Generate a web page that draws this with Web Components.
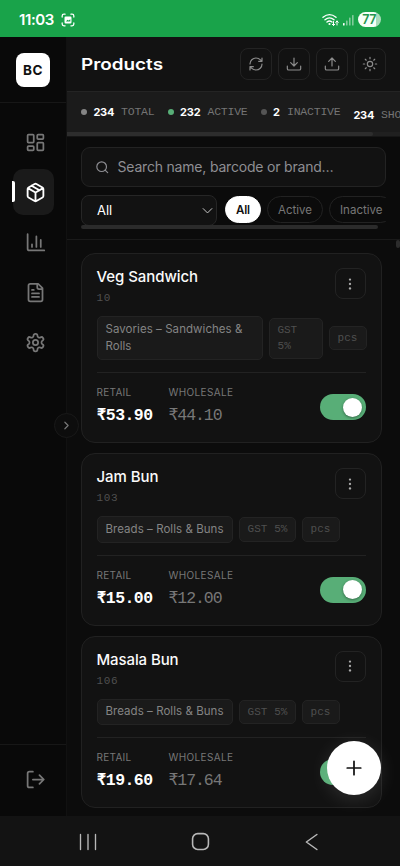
<!DOCTYPE html>
<html lang="en">
<head>
<meta charset="utf-8">
<title>Products</title>
<style>
html,body{margin:0;height:100%;background:#0a0a0a}
body{font-family:Inter,"Noto Sans",sans-serif;color:#fff;overflow:hidden}
</style>
</head>
<body>
<products-app></products-app>
<script>
const ICONS = {
  grid: '<rect x="3" y="3" width="7" height="9" rx="1"/><rect x="14" y="3" width="7" height="5" rx="1"/><rect x="14" y="12" width="7" height="9" rx="1"/><rect x="3" y="16" width="7" height="5" rx="1"/>',
  box: '<path d="m7.5 4.27 9 5.15M21 8a2 2 0 0 0-1-1.73l-7-4a2 2 0 0 0-2 0l-7 4A2 2 0 0 0 3 8v8a2 2 0 0 0 1 1.73l7 4a2 2 0 0 0 2 0l7-4A2 2 0 0 0 21 16ZM3.3 7l8.7 5 8.7-5M12 22V12"/>',
  chart: '<path d="M3 2.5V19a2 2 0 0 0 2 2h17M18 17V9M13 17V5M8 17v-3"/>',
  file: '<path d="M15 2H6a2 2 0 0 0-2 2v16a2 2 0 0 0 2 2h12a2 2 0 0 0 2-2V7ZM14 2v4a2 2 0 0 0 2 2h4M10 9H8M16 13H8M16 17H8"/>',
  gear: '<path d="M12.22 2h-.44a2 2 0 0 0-2 2v.18a2 2 0 0 1-1 1.73l-.43.25a2 2 0 0 1-2 0l-.15-.08a2 2 0 0 0-2.73.73l-.22.38a2 2 0 0 0 .73 2.73l.15.1a2 2 0 0 1 1 1.72v.51a2 2 0 0 1-1 1.74l-.15.09a2 2 0 0 0-.73 2.73l.22.38a2 2 0 0 0 2.73.73l.15-.08a2 2 0 0 1 2 0l.43.25a2 2 0 0 1 1 1.73V20a2 2 0 0 0 2 2h.44a2 2 0 0 0 2-2v-.18a2 2 0 0 1 1-1.73l.43-.25a2 2 0 0 1 2 0l.15.08a2 2 0 0 0 2.73-.73l.22-.39a2 2 0 0 0-.73-2.73l-.15-.08a2 2 0 0 1-1-1.74v-.5a2 2 0 0 1 1-1.74l.15-.09a2 2 0 0 0 .73-2.73l-.22-.38a2 2 0 0 0-2.73-.73l-.15.08a2 2 0 0 1-2 0l-.43-.25a2 2 0 0 1-1-1.73V4a2 2 0 0 0-2-2z"/><circle cx="12" cy="12" r="3"/>',
  logout: '<path d="M9 21H5a2 2 0 0 1-2-2V5a2 2 0 0 1 2-2h4M16.5 17l5-5-5-5M21 12H9"/>',
  refresh: '<path d="M3 12a9 9 0 0 1 9-9 9.75 9.75 0 0 1 6.74 2.74L21 8M21 3v5h-5M21 12a9 9 0 0 1-9 9 9.75 9.75 0 0 1-6.74-2.74L3 16M8 16H3v5"/>',
  download: '<path d="M2 15v4a2 2 0 0 0 2 2h16a2 2 0 0 0 2-2v-4M7 10l5 5 5-5M12 15V3"/>',
  upload: '<path d="M2 15v4a2 2 0 0 0 2 2h16a2 2 0 0 0 2-2v-4M17 8l-5-5-5 5M12 3v12"/>',
  sun: '<circle cx="12" cy="12" r="4"/><path d="M12 2v2M12 20v2M4.93 4.93l1.41 1.41M17.66 17.66l1.41 1.41M2 12h2M20 12h2M6.34 17.66l-1.41 1.41M19.07 4.93l-1.41 1.41"/>',
  search: '<circle cx="11" cy="11" r="8"/><path d="m21 21-4.3-4.3"/>',
  down: '<path d="m4 8.5 8 8 8-8"/>',
  right: '<path d="m9 18 6-6-6-6"/>',
  dots: '<g fill="currentColor" stroke="none"><circle cx="12" cy="4.4" r="2"/><circle cx="12" cy="12" r="2"/><circle cx="12" cy="19.6" r="2"/></g>',
  plus: '<path d="M3 12h18M12 3v18"/>',
  capture: '<path d="M2 7V5a3 3 0 0 1 3-3h2M17 2h2a3 3 0 0 1 3 3v2M22 17v2a3 3 0 0 1-3 3h-2M7 22H5a3 3 0 0 1-3-3v-2"/><path d="M8 6.2h8a2 2 0 0 1 2 2v7.6a2 2 0 0 1-2 2H8a2 2 0 0 1-2-2V8.200a2 2 0 0 1 2-2zm.5 8.500h7.500v-4l-3 2-2-1z" fill="currentColor" fill-rule="evenodd" stroke="none"/>',
  recents: '<path d="M2 2v20M12 2v20M22 2v20"/>',
  home: '<rect x="2" y="2" width="20" height="20" rx="6.500"/>',
  back: '<path d="M18.500 2 4.500 12l14 10"/>'
};

function define(name, html, setup) {
  const t = document.createElement('template');
  t.innerHTML = html;
  customElements.define(name, class extends HTMLElement {
    connectedCallback() {
      if (this.shadowRoot) return;
      const root = this.attachShadow({ mode: 'open' });
      root.append(t.content.cloneNode(true));
      if (setup) setup(this, root);
    }
  });
}

/* Icon: name, size and stroke width */
define('ui-icon', `<style>:host{display:block;flex:none;line-height:0}svg{display:block;fill:none;stroke:currentColor;stroke-linecap:round;stroke-linejoin:round}</style>`, (el, root) => {
  const s = el.getAttribute('size') || 20;
  root.innerHTML += `<svg viewBox="0 0 24 24" width="${s}" height="${s}" stroke-width="${el.getAttribute('sw') || 1.8}">${ICONS[el.getAttribute('name')]}</svg>`;
});

/* Text run fitted to a given advance width, by tracking or by stretching */
define('ui-text', `<style>:host{display:block;flex:none;white-space:nowrap}span{display:inline-block;transform-origin:0 50%}</style><span></span>`, (el, root) => {
  const span = root.querySelector('span'), text = el.getAttribute('text'), w = +el.getAttribute('w');
  span.textContent = text;
  el.style.width = w + 'px';
  const natural = span.getBoundingClientRect().width;
  if (el.hasAttribute('stretch')) span.style.transform = `scaleX(${w / natural})`;
  else span.style.letterSpacing = (w - natural) / text.length + 'px';
});

define('status-bar', `<style>
:host{display:flex;align-items:center;height:37px;box-sizing:border-box;background:#19a34a;padding:2px 19px 0;font-weight:600}
.t{font-size:15px;line-height:20px}
.cap{margin-left:7px}
.wifi{margin-left:auto}.sig{margin-left:4px}
.bat{margin-left:4px;width:23.500px;height:15.500px;border-radius:8px;background:linear-gradient(90deg,#f5fff8 77%,#a9dcbb 77%);color:#23964d;display:flex;justify-content:center;align-items:center;font-size:12.500px;line-height:15px}
svg{display:block}
</style>
<ui-text class="t" text="11:03" w="35"></ui-text>
<ui-icon class="cap" name="capture" size="14" sw="2.2"></ui-icon>
<svg class="wifi" width="17" height="14" viewBox="0 0 17 14" fill="none" stroke="#fff" stroke-linecap="round"><path d="M1 4.200Q7.500-1 14 4.200M3 6.700q4.500-3.600 9 0M5 9q2.500-2 5 0" stroke-width="1.400"/><circle cx="7.500" cy="11" r="1.100" fill="#fff" stroke="none"/><path d="M11.500 8.500v4m-1.300-1.300 1.300 1.300 1.300-1.300M15 12V8m-1.300 1.300L15 8l1.300 1.300" stroke-width="1"/></svg>
<svg class="sig" width="11" height="12" viewBox="0 0 11 12" fill="#fff"><rect y="9" width="1.600" height="2.500" rx=".6"/><g opacity=".45"><rect x="3" y="6.500" width="1.600" height="5" rx=".6"/><rect x="6" y="3.500" width="1.600" height="8" rx=".6"/><rect x="9" y="1" width="1.600" height="10.500" rx=".6"/></g></svg>
<div class="bat"><ui-text text="77" w="14"></ui-text></div>`);

define('side-item', `<style>
:host{display:flex;width:41px;height:46px;align-items:center;justify-content:center;color:#777;border-radius:10px;position:relative;box-sizing:border-box;padding-left:4px}
:host([active]){background:#1a1a1a;color:#fff}
:host([active])::before{content:"";position:absolute;left:-1px;top:12px;width:3px;height:21px;border-radius:0 2px 2px 0;background:#fff}
</style><slot></slot>`);

define('side-bar', `<style>
:host{display:flex;flex-direction:column;width:67px;height:100%;box-sizing:border-box;background:#090909;border-right:1px solid #111;position:relative}
.top{height:65px;box-sizing:content-box;border-bottom:1px solid #171717;display:flex;justify-content:center;align-items:center}
.logo{width:34px;height:34px;border-radius:8px;background:#fff;color:#111;display:flex;align-items:center;justify-content:center;font:700 13.500px/18px Inter,sans-serif}
nav{display:flex;flex-direction:column;gap:4px;padding:16px 0 0 13px;flex:1}
.bot{height:70px;border-top:1px solid #171717;display:flex;justify-content:flex-start;align-items:center;padding:0 0 2px 13px;box-sizing:content-box;height:69px}
.exp{position:absolute;left:54px;top:376px;width:25px;height:25px;box-sizing:border-box;border:1px solid #191919;border-radius:50%;background:#0d0d0d;color:#777;display:flex;align-items:center;justify-content:center}
</style>
<div class="top"><div class="logo"><ui-text text="BC" w="20"></ui-text></div></div>
<nav>
<side-item><ui-icon name="grid" size="21" sw="2"></ui-icon></side-item>
<side-item active><ui-icon name="box" size="21" sw="2.1"></ui-icon></side-item>
<side-item><ui-icon name="chart" size="21" sw="2"></ui-icon></side-item>
<side-item><ui-icon name="file" size="21" sw="2"></ui-icon></side-item>
<side-item><ui-icon name="gear" size="21" sw="2"></ui-icon></side-item>
</nav>
<div class="bot"><side-item><ui-icon name="logout" size="21" sw="2"></ui-icon></side-item></div>
<div class="exp"><ui-icon name="right" size="13" sw="2.2"></ui-icon></div>`);

define('icon-button', `<style>:host{display:flex;width:32px;height:32px;box-sizing:border-box;border:1px solid #232323;border-radius:8px;align-items:center;justify-content:center;color:#8b8b8b;flex:none}</style><slot></slot>`);

define('page-header', `<style>
:host{display:flex;align-items:center;height:54px;box-sizing:border-box;background:#121212;padding:0 14px 0 14px;flex:none}
ui-text{font-size:16px;font-weight:600;line-height:22px;margin-top:-1px}
.a{display:flex;gap:6px;margin-left:auto}
</style>
<ui-text text="Products" w="82" stretch></ui-text>
<div class="a"><icon-button><ui-icon name="refresh" size="16"></ui-icon></icon-button><icon-button><ui-icon name="download" size="16"></ui-icon></icon-button><icon-button><ui-icon name="upload" size="16"></ui-icon></icon-button><icon-button><ui-icon name="sun" size="16"></ui-icon></icon-button></div>`);

define('stat-count', `<style>
:host{display:flex;align-items:center;flex:none;line-height:16px}
i{width:6px;height:6px;border-radius:50%;background:var(--dot);margin-right:6.500px}
.n{font-size:11px;font-weight:700;color:#fff}
.l{font:11.500px/16px "Liberation Mono",monospace;color:#747474;margin-left:7px}
</style>`, (el, root) => {
  const a = n => el.getAttribute(n);
  root.innerHTML += `${a('dot') ? `<i style="--dot:${a('dot')}"></i>` : ''}<ui-text class="n" text="${a('n')}" w="${a('nw')}"></ui-text><ui-text class="l" text="${a('label')}" w="${a('lw')}"></ui-text>`;
});

define('stats-row', `<style>
:host{display:flex;flex-direction:column;height:46px;box-sizing:border-box;background:#1b1b1b;border-top:1px solid #242424;border-bottom:1px solid #161616;overflow:hidden;flex:none}
.r{display:flex;height:40px;gap:13px;padding-left:14px;align-items:center}
.last{padding-top:5px}
.bar{height:4px;background:#202020}.bar div{width:306px;height:4px;background:#2d2d2d;border-radius:0 2px 2px 0}
</style>
<div class="r"><stat-count dot="#858585" n="234" nw="20.5" label="TOTAL" lw="33.5"></stat-count><stat-count dot="#58ae77" n="232" nw="20.5" label="ACTIVE" lw="40"></stat-count><stat-count dot="#555" n="2" nw="7" label="INACTIVE" lw="53.5"></stat-count><stat-count class="last" n="234" nw="20.5" label="SHOWN" lw="33.5"></stat-count></div>
<div class="bar"><div></div></div>`);

define('filter-chip', `<style>
:host{display:flex;align-items:center;justify-content:center;height:27px;box-sizing:border-box;border:1px solid #222;border-radius:14px;color:#777;font-size:11.500px;line-height:16px;padding:0 10px;flex:none}
:host([active]){background:#fff;color:#111;border-color:#fff;font-weight:600}
</style><slot></slot>`);

define('filter-panel', `<style>
:host{display:block;height:103px;box-sizing:border-box;padding:10px 14px 0;border-bottom:1px solid #1a1a1a;background:#0b0b0b;flex:none}
.s{height:40px;box-sizing:border-box;border:1px solid #232323;border-radius:9px;background:#121212;display:flex;align-items:center;gap:8px;padding:0 13px;color:#8e8e93;font-size:14px;line-height:20px}
.s ui-text{margin-top:-1px}
.r{display:flex;gap:8px;margin-top:8px;height:30px;overflow:hidden}
.sel{width:136px;height:31px;box-sizing:border-box;border:1px solid #262626;border-radius:8px;background:#121212;display:flex;align-items:center;justify-content:space-between;padding:0 2px 1px 15px;font-size:13px;line-height:18px;flex:none}
.c{display:flex;gap:6px;align-items:center;height:29px}
.sel ui-icon{color:#ccc}
.bar{width:297px;height:4px;background:#2b2b2b;border-radius:2px}
</style>
<div class="s"><ui-icon name="search" size="14.500" sw="1.900"></ui-icon><ui-text text="Search name, barcode or brand…" w="216"></ui-text></div>
<div class="r"><div class="sel"><ui-text text="All" w="15"></ui-text><ui-icon name="down" size="13"></ui-icon></div>
<div class="c"><filter-chip active><ui-text text="All" w="14"></ui-text></filter-chip><filter-chip><ui-text text="Active" w="34"></ui-text></filter-chip><filter-chip><ui-text text="Inactive" w="42.5"></ui-text></filter-chip></div></div>
<div class="bar"></div>`);

define('toggle-switch', `<style>:host{display:flex;justify-content:flex-end;width:46px;height:26px;box-sizing:border-box;padding:3.500px;border-radius:13px;background:#58ae77;flex:none}i{width:19px;height:19px;border-radius:50%;background:#fff;box-shadow:0 1px 3px #0006}</style><i></i>`);

define('product-tag', `<style>
:host{display:block;box-sizing:border-box;border:1px solid #232323;border-radius:5px;background:#1a1a1a;color:#848484;font-size:11.500px;line-height:17.500px;padding:3.500px 8px;flex:none}
:host([mono]){font:11px/16.500px "Liberation Mono",monospace;color:#4f4f4f;padding:3px 8px}
</style><slot></slot>`);

define('product-card', `<style>
:host{display:block;box-sizing:border-box;border:1px solid #212121;border-radius:14px;background:#121212;padding:14px 15px 15px 14.500px;flex:none}
.h{display:flex;justify-content:space-between;height:38px}
.h icon-button{width:31px;height:31px;color:#aaa}
.name{font-size:15px;font-weight:550;line-height:20px;color:#fafafa;margin-top:-1px}
.code{font:11px/16px "Liberation Mono",monospace;color:#505050;margin-top:3px}
.tags{display:flex;gap:6px;align-items:center;margin:10px -1px 12px 0}
.f{border-top:1px solid #222;display:flex;padding-top:11px;gap:16px}
.p{display:flex;flex-direction:column;gap:5px}
.l{font-size:10px;line-height:16px;color:#777}
.v{font:16.500px/22px "Liberation Mono",monospace;color:#777}
.b{font-weight:700;color:#fff}
toggle-switch{margin:10px 0 0 auto}
</style>`, (el, root) => {
  const a = n => el.getAttribute(n);
  const tags = el.hasAttribute('wrap')
    ? `<product-tag style="width:166px"><ui-text text="Savories – Sandwiches &amp;" w="137"></ui-text><ui-text text="Rolls" w="26"></ui-text></product-tag><product-tag mono style="width:54px"><ui-text text="GST" w="19.5"></ui-text><ui-text text="5%" w="13.5"></ui-text></product-tag>`
    : `<product-tag style="width:136px"><ui-text text="Breads – Rolls &amp; Buns" w="118"></ui-text></product-tag><product-tag mono style="width:57px"><ui-text text="GST 5%" w="40"></ui-text></product-tag>`;
  root.innerHTML += `<div class="h"><div><ui-text class="name" text="${a('name')}" w="${a('nw')}"></ui-text><ui-text class="code" text="${a('code')}" w="${a('code').length * 7.2}"></ui-text></div><icon-button><ui-icon name="dots" size="14"></ui-icon></icon-button></div>
  <div class="tags">${tags}<product-tag mono style="width:38px"><ui-text text="pcs" w="20"></ui-text></product-tag></div>
  <div class="f"><div class="p"><ui-text class="l" text="RETAIL" w="35"></ui-text><ui-text class="v b" text="${a('retail')}" w="56"></ui-text></div><div class="p"><ui-text class="l" text="WHOLESALE" w="65"></ui-text><ui-text class="v" text="${a('whole')}" w="53"></ui-text></div><toggle-switch></toggle-switch></div>`;
});

define('fab-button', `<style>:host{position:absolute;right:19px;bottom:71px;width:54px;height:54px;border-radius:50%;background:#fff;color:#111;display:flex;align-items:center;justify-content:center;box-shadow:0 4px 20px #ffffff1f}</style><ui-icon name="plus" size="18" sw="2.300"></ui-icon>`);

define('system-nav', `<style>:host{display:flex;align-items:center;justify-content:space-between;height:50px;box-sizing:border-box;background:#131313;padding:1px 79px 0;color:#b8b8b8;flex:none}</style>
<ui-icon name="recents" size="18"></ui-icon><ui-icon name="home" size="19" sw="2"></ui-icon><ui-icon name="back" size="18" sw="2"></ui-icon>`);

define('products-app', `<style>
:host{display:flex;flex-direction:column;width:400px;height:866px;position:relative;overflow:hidden;background:#0c0c0c}
.m{display:flex;height:779px}
side-bar{flex:none;z-index:1}
main{display:flex;flex-direction:column;width:333px;height:779px;overflow:hidden}
.list{display:flex;flex-direction:column;gap:10px;padding:13px 18.500px 0 14px;position:relative;flex:1;min-height:0;background:#0c0c0c}
.list::after{content:"";position:absolute;right:0;top:0;width:4px;height:8px;background:#2c2c2c;border-radius:2px}
</style>
<status-bar></status-bar>
<div class="m"><side-bar></side-bar>
<main><page-header></page-header><stats-row></stats-row><filter-panel></filter-panel>
<div class="list">
<product-card wrap name="Veg Sandwich" nw="101.5" code="10" retail="₹53.90" whole="₹44.10"></product-card>
<product-card name="Jam Bun" nw="62" code="103" retail="₹15.00" whole="₹12.00"></product-card>
<product-card name="Masala Bun" nw="82" code="106" retail="₹19.60" whole="₹17.64"></product-card>
</div></main></div>
<system-nav></system-nav><fab-button></fab-button>`);
</script>
</body>
</html>
